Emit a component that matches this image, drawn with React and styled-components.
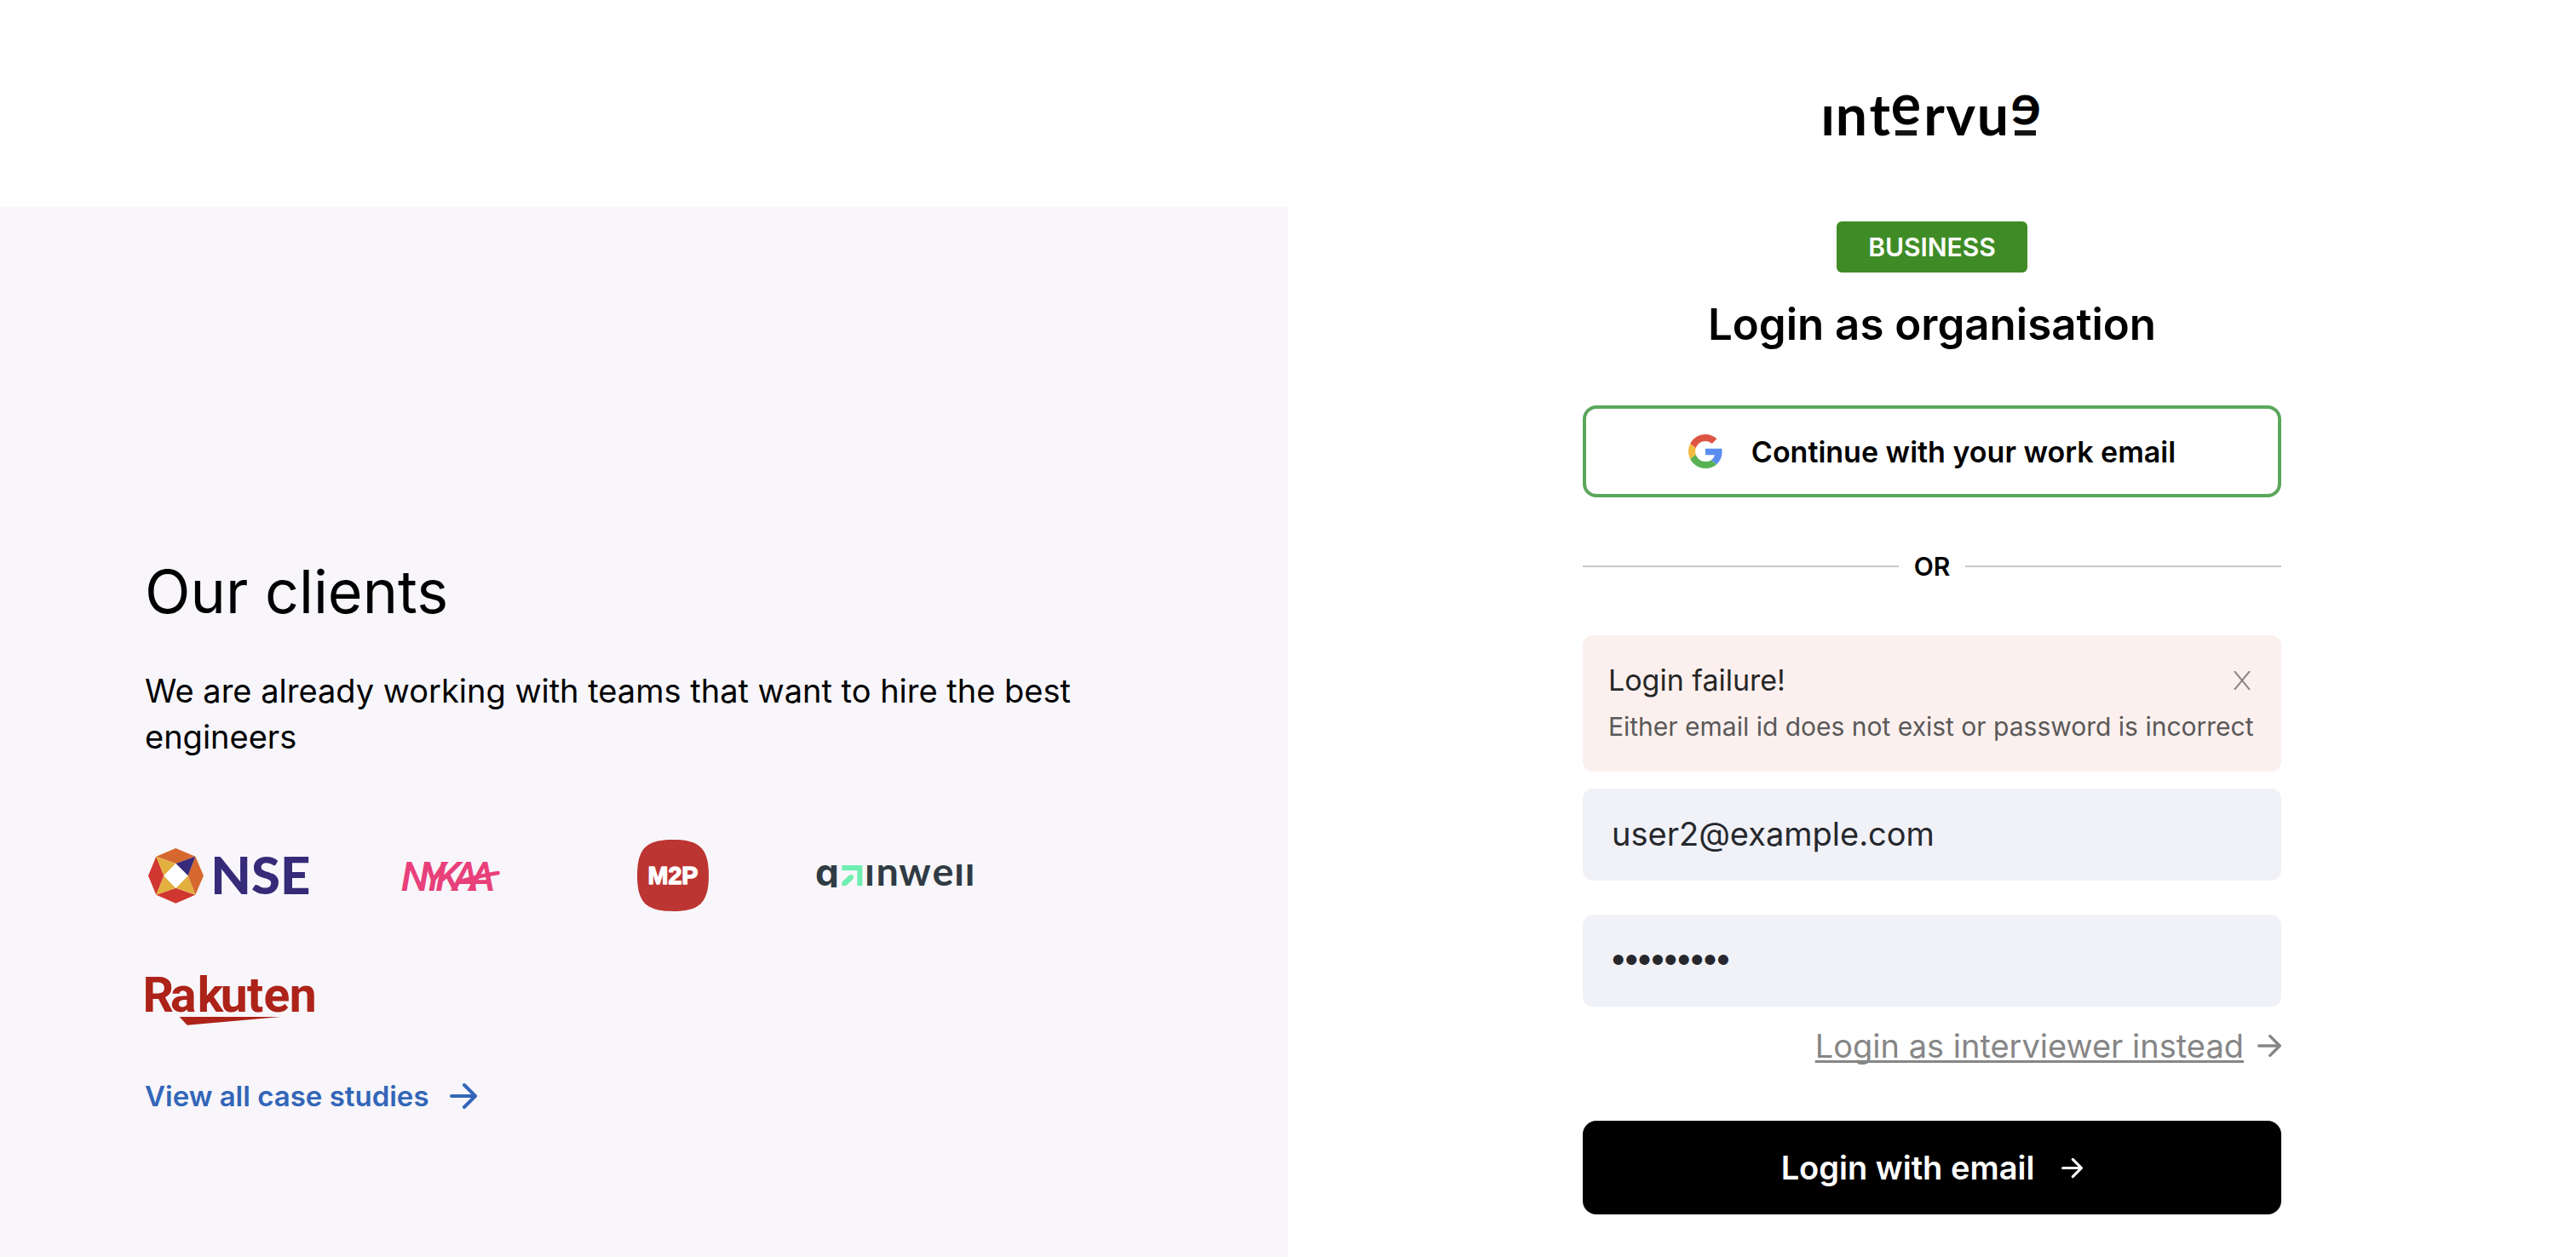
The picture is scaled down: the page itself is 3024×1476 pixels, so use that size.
import React, { useState } from "react";
import styled, { createGlobalStyle } from "styled-components";

const GlobalStyle = createGlobalStyle`
  *, *::before, *::after { box-sizing: border-box; }
  body {
    margin: 0;
    background: #ffffff;
    color: #000000;
    font-family: Inter, "Liberation Sans", sans-serif;
  }
  h1, h2, p { margin: 0; font-weight: 400; }
  button, input { font-family: inherit; }
`;

const Page = styled.main`
  display: grid;
  grid-template-columns: 1fr 1fr;
  min-height: 100vh;
`;

const ClientsPanel = styled.section`
  margin-top: 243px;
  padding: 412px 170px 60px;
  background: #f8f6fa;
`;

const ClientsTitle = styled.h2`
  font-size: 70px;
  line-height: 80px;
`;

const ClientsText = styled.p`
  max-width: 1140px;
  margin-top: 49px;
  font-size: 38px;
  line-height: 54px;
`;

const LogoGrid = styled.div`
  display: grid;
  grid-template-columns: repeat(4, 200px);
  gap: 46px 60px;
  margin-top: 86px;
`;

const ClientLogo = styled.svg`
  display: block;
  width: 200px;
  height: 100px;
  overflow: visible;
`;

const StudiesLink = styled.a`
  display: inline-flex;
  align-items: center;
  gap: 24px;
  margin-top: 39px;
  color: #3366b8;
  font-size: 33px;
  font-weight: 600;
  line-height: 48px;
  text-decoration: none;
`;

const LoginPanel = styled.section`
  display: flex;
  flex-direction: column;
  align-items: center;
  padding: 110px 40px 50px;
`;

const BrandLogo = styled.svg`
  display: block;
  width: 256px;
  height: 52px;
  overflow: visible;
`;

const Badge = styled.span`
  margin-top: 98px;
  padding: 0 37px;
  border-radius: 6px;
  background: #3f8c27;
  color: #ffffff;
  font-size: 30px;
  font-weight: 600;
  line-height: 60px;
`;

const LoginTitle = styled.h1`
  margin-top: 31px;
  font-size: 51px;
  font-weight: 600;
  line-height: 60px;
`;

const Form = styled.form`
  display: flex;
  flex-direction: column;
  width: 100%;
  max-width: 820px;
  margin-top: 65px;
`;

const GoogleButton = styled.button`
  display: flex;
  align-items: center;
  justify-content: center;
  gap: 34px;
  height: 108px;
  border: 4px solid #5aa75c;
  border-radius: 16px;
  background: #ffffff;
  color: #000000;
  font-size: 34px;
  font-weight: 600;
`;

const Divider = styled.div`
  display: flex;
  align-items: center;
  gap: 18px;
  margin: 61px 0;
  font-size: 30px;
  font-weight: 600;
  line-height: 40px;
  &::before, &::after {
    content: "";
    flex: 1;
    height: 2px;
    background: #c8c8c8;
  }
`;

const Alert = styled.div`
  display: flex;
  flex-direction: column;
  gap: 10px;
  height: 160px;
  margin-bottom: 20px;
  padding: 29px 30px;
  border-radius: 12px;
  background: #fcf0ee;
`;

const AlertHead = styled.div`
  display: flex;
  align-items: center;
  justify-content: space-between;
`;

const AlertTitle = styled.p`
  color: #262626;
  font-size: 34px;
  line-height: 48px;
`;

const AlertText = styled.p`
  color: #595959;
  font-size: 30px;
  line-height: 40px;
  white-space: nowrap;
`;

const CloseButton = styled.button`
  display: flex;
  padding: 0 6px;
  border: 0;
  background: none;
`;

const FieldGroup = styled.div`
  position: relative;
  & + & { margin-top: 40px; }
`;

const HiddenLabel = styled.label`
  position: absolute;
  opacity: 0;
  pointer-events: none;
`;

const Field = styled.input`
  display: block;
  width: 100%;
  height: 108px;
  padding: 0 34px 2px;
  border: 0;
  border-radius: 12px;
  background: #f1f2f8;
  color: #26282d;
  font-size: 38px;
  outline: 0;
  &[type="password"] {
    font-family: "Liberation Sans", sans-serif;
    font-size: 44px;
  }
`;

const SwitchLink = styled.a`
  display: inline-flex;
  align-items: center;
  align-self: flex-end;
  gap: 16px;
  margin-top: 22px;
  color: #868686;
  font-size: 38px;
  line-height: 48px;
  text-decoration: none;
  span {
    text-decoration: underline;
    text-decoration-thickness: 3px;
    text-underline-offset: 3px;
    text-decoration-skip-ink: none;
  }
`;

const SubmitButton = styled.button`
  display: flex;
  align-items: center;
  justify-content: center;
  gap: 32px;
  height: 110px;
  margin-top: 64px;
  border: 0;
  border-radius: 16px;
  background: #000000;
  color: #ffffff;
  font-size: 38px;
  font-weight: 600;
`;

function Arrow({ size, stroke }) {
  return (
    <svg width={size} height={size} viewBox="0 0 32 32" fill="none" stroke="currentColor" strokeWidth={stroke} strokeLinecap="round" strokeLinejoin="round" aria-hidden="true">
      <path d="M2 16H30M17 3L30 16L17 29" />
    </svg>
  );
}

function GoogleIcon() {
  return (
    <svg width="40" height="40" viewBox="0 0 48 48" aria-hidden="true">
      <path fill="#de5442" d="M24 9.5c3.54 0 6.71 1.22 9.21 3.6l6.85-6.85C35.9 2.38 30.47 0 24 0 14.62 0 6.51 5.38 2.56 13.22l7.98 6.19C12.43 13.72 17.74 9.5 24 9.5z" />
      <path fill="#5b8def" d="M47.5 24.55c0-1.57-.15-3.09-.38-4.55H24v9.02h12.94c-.58 2.96-2.26 5.48-4.78 7.18l7.73 6c4.51-4.18 7.61-10.36 7.61-17.65z" />
      <path fill="#f2bc42" d="M10.53 28.59c-.48-1.45-.76-2.99-.76-4.59s.27-3.14.76-4.59l-7.98-6.19C.92 16.46 0 20.12 0 24c0 3.88.92 7.54 2.56 10.78l7.97-6.19z" />
      <path fill="#58b254" d="M24 48c6.48 0 11.93-2.13 15.89-5.81l-7.73-6c-2.15 1.45-4.92 2.3-8.16 2.3-6.26 0-11.57-4.22-13.47-9.91l-7.98 6.19C6.51 42.62 14.62 48 24 48z" />
    </svg>
  );
}

function IntervueLogo() {
  return (
    <BrandLogo viewBox="120 90 768 156" role="img" aria-label="intervue">
      <g fontFamily="Lato" fontWeight="700" fontSize="198" textAnchor="middle" fill="#000">
        <text x="137" y="238">ı</text>
        <text x="220" y="238">n</text>
        <text x="320" y="238">t</text>
        <text x="412" y="199">e</text>
        <text x="512" y="238">r</text>
        <text x="605" y="238">v</text>
        <text x="718" y="238">u</text>
        <text transform="translate(834 199) scale(-1 1)">e</text>
      </g>
      <path fill="#151515" d="M375 219h75v19h-75zM795 219h75v19h-75z" />
    </BrandLogo>
  );
}

function NseLogo() {
  return (
    <ClientLogo viewBox="60 54 600 300" role="img" aria-label="NSE">
      <path fill="#d6672f" d="M169 108L238 137L169 162L100 137zM238 137L267 205L238 272L212 205z" />
      <path fill="#d03730" d="M238 272L169 302L100 272L169 248zM100 272L72 205L100 137L127 205z" />
      <path fill="#e3af3f" d="M100 137L169 162L127 205zM100 272L127 205L169 248zM238 272L169 248L212 205z" />
      <path fill="#352b78" d="M238 137L212 205L169 162z" />
      <path fill="#fff" d="M169 162L212 205L169 248L127 205z" />
      <text x="292" y="271" fontFamily="Lato" fontWeight="900" fontSize="185" fill="#352b78">NSE</text>
    </ClientLogo>
  );
}

function NykaaLogo() {
  return (
    <ClientLogo viewBox="840 54 600 300" role="img" aria-label="NYKAA">
      <text x="962 1034 1084 1144 1202" y="259" fontFamily="Roboto" fontStyle="italic" fontWeight="500" fontSize="144" fill="#e8407a">NYKAA</text>
      <path d="M1180 222Q1245 204 1304 195" fill="none" stroke="#e8407a" strokeWidth="13" strokeLinecap="round" />
    </ClientLogo>
  );
}

function M2pLogo() {
  return (
    <ClientLogo viewBox="-90 54 600 300" role="img" aria-label="M2P">
      <path fill="#bd3532" d="M210 78C300 78 336 105 336 204S300 330 210 330S84 303 84 204S120 78 210 78z" />
      <text x="210" y="235" textAnchor="middle" fontFamily="Liberation Sans" fontWeight="700" fontSize="86" fill="#fff" stroke="#fff" strokeWidth="4" strokeLinejoin="round">M2P</text>
    </ClientLogo>
  );
}

function GainwellLogo() {
  return (
    <ClientLogo viewBox="690 54 600 300" role="img" aria-label="gainwell">
      <clipPath id="gainwell-band">
        <rect x="690" y="165" width="600" height="81" />
      </clipPath>
      <g clipPath="url(#gainwell-band)" fontFamily="Lato" fontWeight="700" fontSize="140" textAnchor="middle" fill="#303b44">
        <text x="753" y="240" fontFamily="Inter" fontSize="132">g</text>
        <text x="903" y="240">i</text>
        <text x="965" y="240">n</text>
        <text x="1062" y="240">w</text>
        <text x="1161" y="240">e</text>
        <text x="1218" y="240">l</text>
        <text x="1256" y="240">l</text>
      </g>
      <path fill="#6eeeb0" d="M805 168H877V240H859V186H805zM832 202H845V216L820 240H805V227z" />
    </ClientLogo>
  );
}

function RakutenLogo() {
  return (
    <ClientLogo viewBox="60 492 600 300" role="img" aria-label="Rakuten">
      <g fontFamily="Roboto" fontWeight="700" fontSize="171" textAnchor="middle" fill="#ad2319">
        <text x="107" y="684">R</text>
        <text x="196" y="684">a</text>
        <text x="291" y="684">k</text>
        <text x="374" y="684">u</text>
        <text x="449" y="684">t</text>
        <text x="525" y="684">e</text>
        <text x="617" y="684">n</text>
      </g>
      <path fill="#ad2319" d="M182 702H538L209 731z" />
    </ClientLogo>
  );
}

export default function App() {
  const [email, setEmail] = useState("user2@example.com");
  const [password, setPassword] = useState("password1");

  return (
    <>
      <GlobalStyle />
      <Page>
        <ClientsPanel>
          <ClientsTitle>Our clients</ClientsTitle>
          <ClientsText>We are already working with teams that want to hire the best engineers</ClientsText>
          <LogoGrid>
            <NseLogo />
            <NykaaLogo />
            <M2pLogo />
            <GainwellLogo />
            <RakutenLogo />
          </LogoGrid>
          <StudiesLink href="#case-studies">
            View all case studies
            <Arrow size={32} stroke={4} />
          </StudiesLink>
        </ClientsPanel>

        <LoginPanel>
          <IntervueLogo />
          <Badge>BUSINESS</Badge>
          <LoginTitle>Login as organisation</LoginTitle>
          <Form onSubmit={(event) => event.preventDefault()}>
            <GoogleButton type="button">
              <GoogleIcon />
              Continue with your work email
            </GoogleButton>
            <Divider>OR</Divider>
            <Alert role="alert">
              <AlertHead>
                <AlertTitle>Login failure!</AlertTitle>
                <CloseButton type="button" aria-label="Close">
                  <svg width="20" height="22" viewBox="0 0 20 22" fill="none" stroke="#8c8685" strokeWidth="2" aria-hidden="true">
                    <path d="M1 0L19 22M19 0L1 22" />
                  </svg>
                </CloseButton>
              </AlertHead>
              <AlertText>Either email id does not exist or password is incorrect</AlertText>
            </Alert>
            <FieldGroup>
              <HiddenLabel htmlFor="email">Email</HiddenLabel>
              <Field id="email" type="email" value={email} onChange={(event) => setEmail(event.target.value)} />
            </FieldGroup>
            <FieldGroup>
              <HiddenLabel htmlFor="password">Password</HiddenLabel>
              <Field id="password" type="password" value={password} onChange={(event) => setPassword(event.target.value)} />
            </FieldGroup>
            <SwitchLink href="#interviewer">
              <span>Login as interviewer instead</span>
              <Arrow size={28} stroke={4} />
            </SwitchLink>
            <SubmitButton type="submit">
              Login with email
              <Arrow size={25} stroke={4} />
            </SubmitButton>
          </Form>
        </LoginPanel>
      </Page>
    </>
  );
}
